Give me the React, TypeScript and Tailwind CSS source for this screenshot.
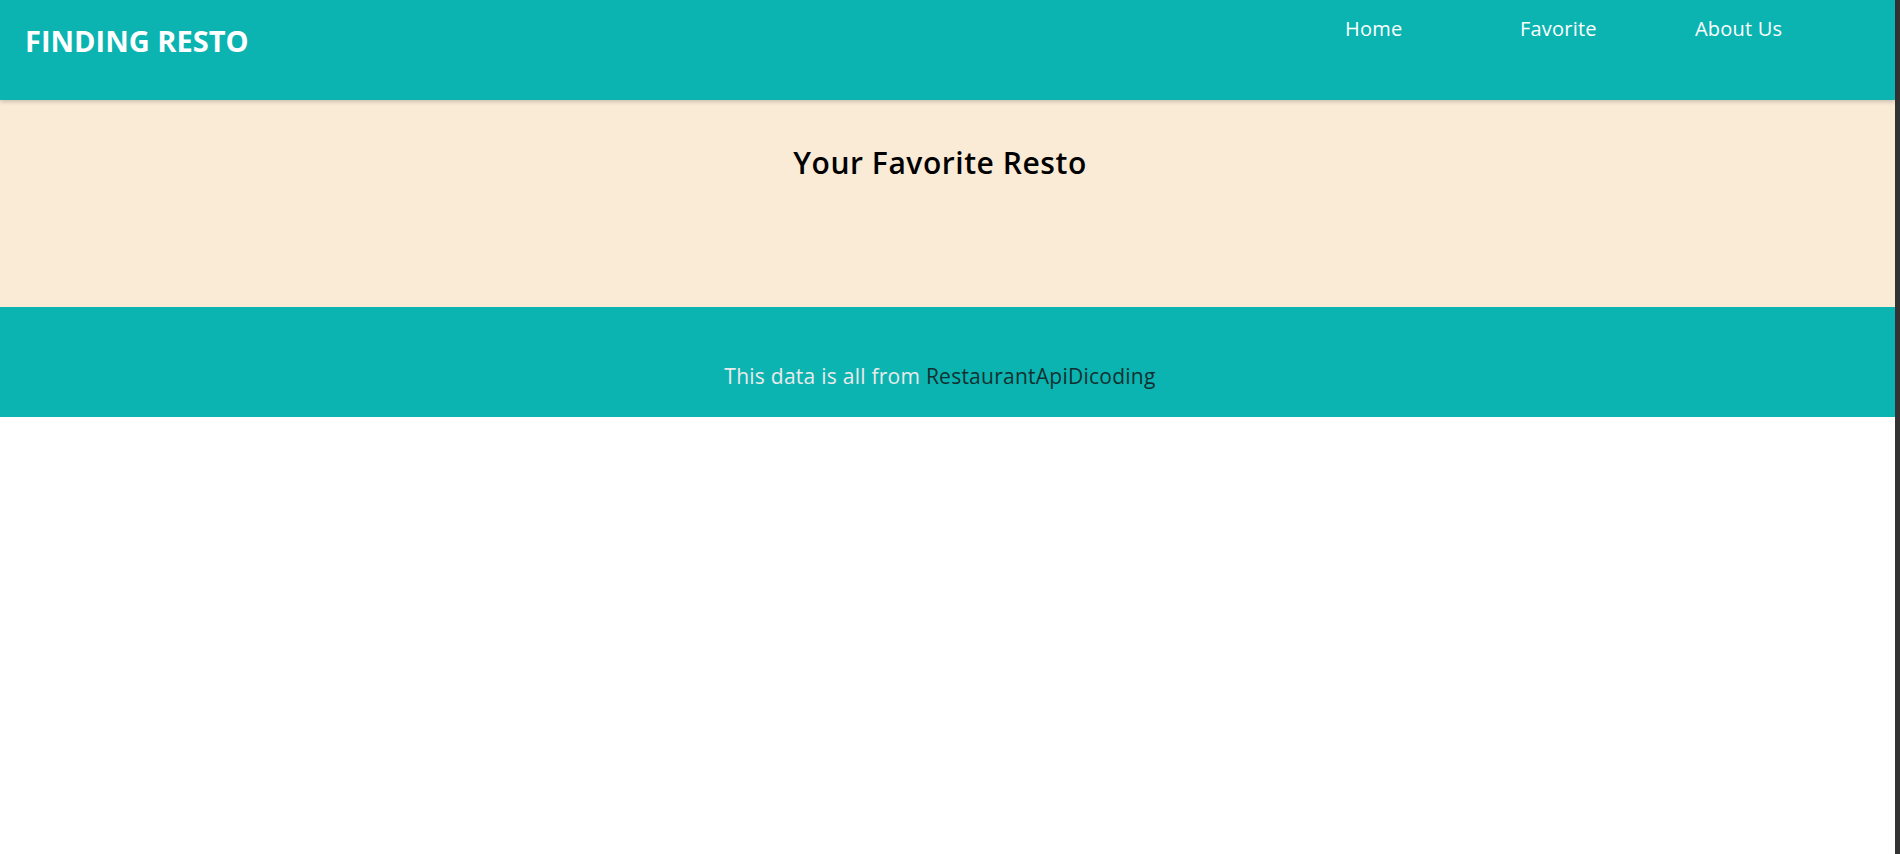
export default function App() {
  const font = { fontFamily: '"Open Sans", "Noto Sans", sans-serif' };

  return (
    <div className="flex min-h-[854px] w-full bg-white" style={font}>
      <div className="flex-1 flex flex-col">
        <header className="h-[100px] bg-[#0bb4b1] flex items-start justify-between pl-[25px] pr-[25px] shadow-[0_2px_4px_rgba(0,0,0,0.18)] relative z-10">
          <h1 className="text-[29px] leading-[36px] font-bold text-white pt-[23px] tracking-[0px]">
            FINDING RESTO
          </h1>
          <nav className="flex pt-[15px]">
            <a className="w-[175px] text-[20px] leading-[28px] text-white tracking-[0.2px]">Home</a>
            <a className="w-[175px] text-[20px] leading-[28px] text-white tracking-[0.2px]">Favorite</a>
            <a className="w-[175px] text-[20px] leading-[28px] text-white tracking-[0.2px]">About Us</a>
          </nav>
        </header>

        <section className="h-[207px] bg-[#faebd7] flex justify-center pr-[15px]">
          <h2 className="text-[30px] leading-[36px] font-semibold text-black pt-[45px] tracking-[0.55px]">
            Your Favorite Resto
          </h2>
        </section>

        <footer className="h-[110px] bg-[#0bb4b1] flex justify-center items-start pr-[15px] pt-[55px]">
          <p className="text-[21px] leading-[28px] text-[#eaeaea] tracking-[0.25px]">
            This data is all from <span className="text-[#123030]">RestaurantApiDicoding</span>
          </p>
        </footer>
      </div>
      <div className="w-[5px] bg-[#333333]" />
    </div>
  );
}
